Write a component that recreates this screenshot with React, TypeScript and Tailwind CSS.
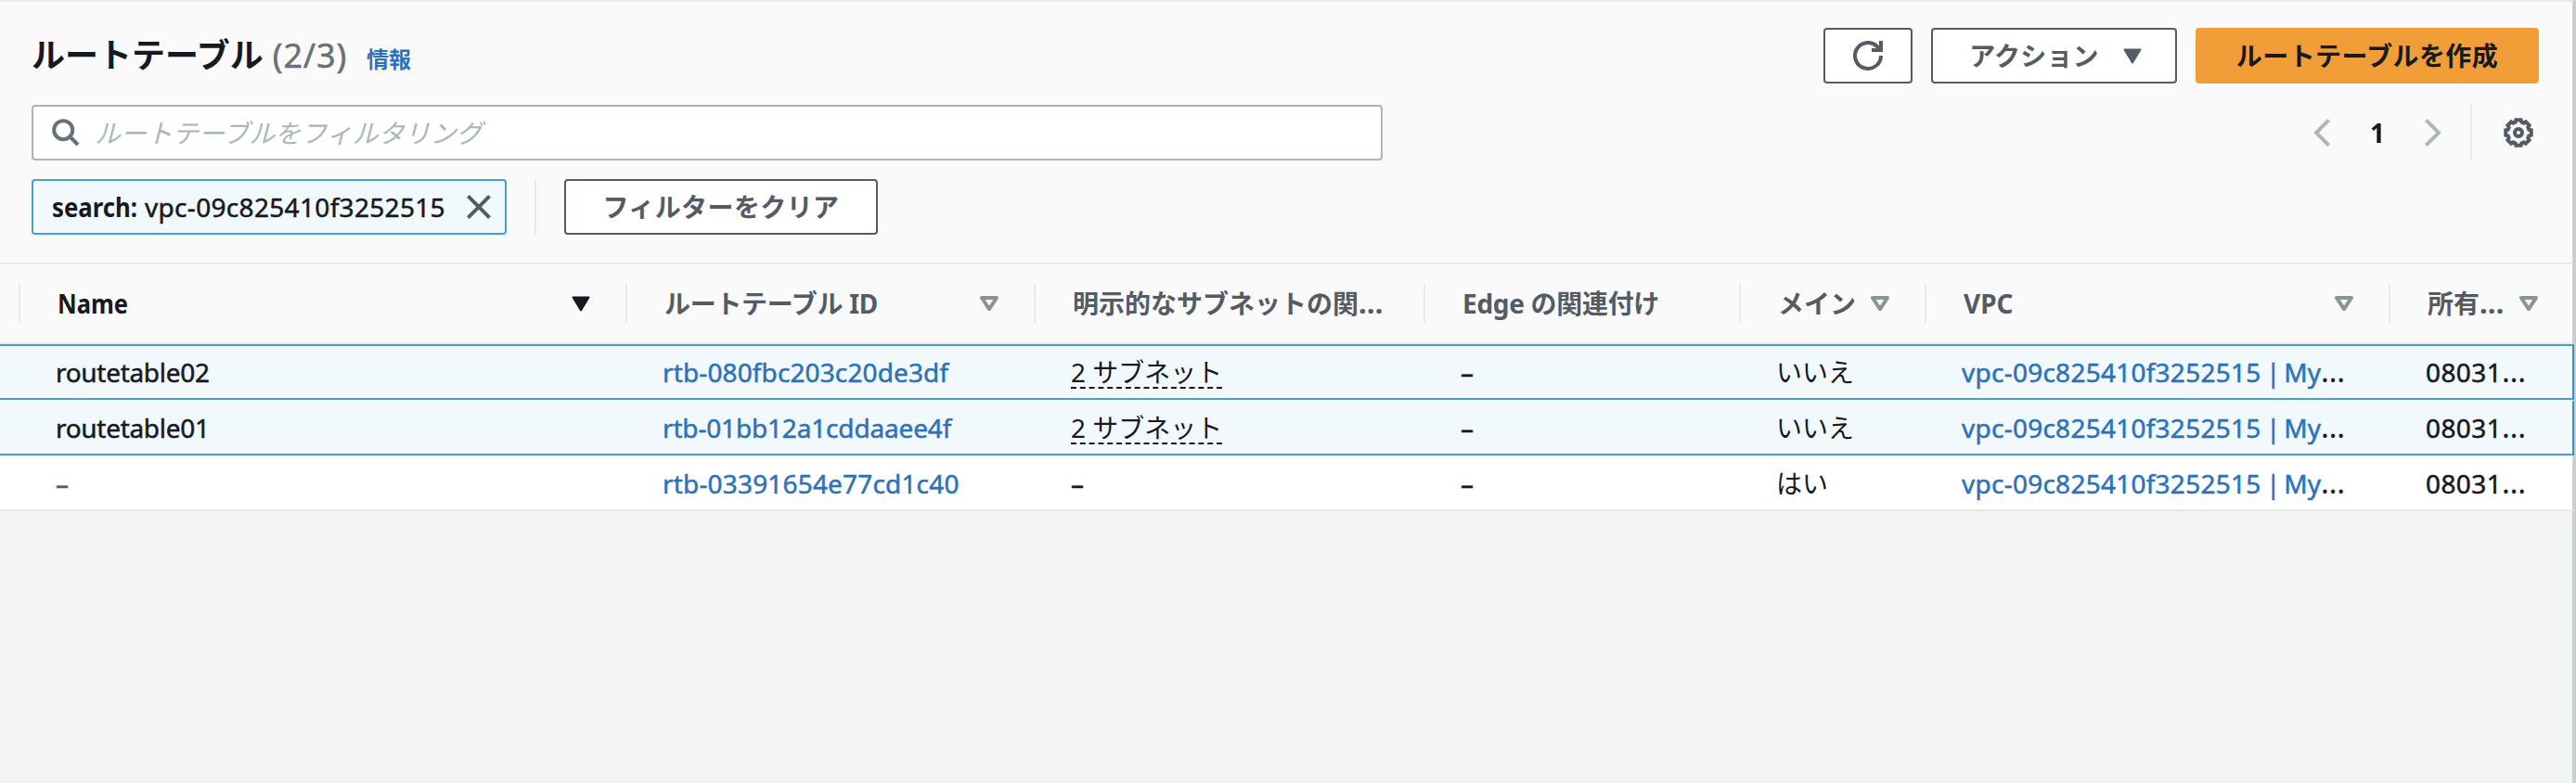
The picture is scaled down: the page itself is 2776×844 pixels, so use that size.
import React from "react";

function Triangle({ color }: { color: string }) {
  return (
    <svg width="20" height="17" viewBox="0 0 20 17" className="shrink-0">
      <path d="M1.5 1.5H18.5L10 15.5Z" fill={color} stroke={color} strokeWidth="2" strokeLinejoin="round" />
    </svg>
  );
}

function TriangleOutline() {
  return (
    <svg width="20" height="17" viewBox="0 0 20 17" className="shrink-0">
      <path d="M2 2H18L10 14.2Z" fill="none" stroke="#879596" strokeWidth="4" strokeLinejoin="round" />
    </svg>
  );
}

const gearPoints = Array.from({ length: 8 }, (_, k) =>
  [
    [14, -11],
    [14, 11],
    [11.8, 16],
    [11.8, 29],
  ].map(([r, offset]) => {
    const a = ((k * 45 + offset) * Math.PI) / 180;
    return `${(16 + r * Math.cos(a)).toFixed(2)},${(16 + r * Math.sin(a)).toFixed(2)}`;
  }),
)
  .flat()
  .join(" ");

function Gear() {
  return (
    <svg width="32" height="32" viewBox="0 0 32 32" fill="none" stroke="#545b64" strokeWidth="4">
      <polygon points={gearPoints} />
      <circle cx="16" cy="16" r="4" />
    </svg>
  );
}

function Ellipsis({ className = "text-[33px] [-webkit-text-stroke:0px]" }: { className?: string }) {
  return <span className={"leading-[0] " + className}>…</span>;
}

type Column = {
  label: string;
  width: string;
  text?: string;
  cut?: boolean;
  sort?: "filled" | "outline";
};

const columns: Column[] = [
  { label: "Name", width: "w-[654px]", text: "inline-block origin-left scale-x-[.91]", sort: "filled" },
  { label: "ルートテーブル ID", width: "w-[440px]", text: "tracking-[-0.3px]", sort: "outline" },
  { label: "明示的なサブネットの関", width: "w-[420px]", cut: true },
  { label: "Edge の関連付け", width: "w-[340px]", text: "tracking-[-0.3px]" },
  { label: "メイン", width: "w-[200px]", sort: "outline" },
  { label: "VPC", width: "w-[500px]", sort: "outline" },
  { label: "所有", width: "w-[199px]", cut: true, sort: "outline" },
];

const rows = [
  {
    name: "routetable02",
    id: "rtb-080fbc203c20de3df",
    idTracking: "tracking-[0.12px]",
    subnets: "2 サブネット",
    main: "いいえ",
    frame: "bg-[#f2f9fd] border-t-[#48a0c7] border-b-[#48a0c7] border-r-[#3b8fb8]",
  },
  {
    name: "routetable01",
    id: "rtb-01bb12a1cddaaee4f",
    idTracking: "tracking-[-0.17px]",
    subnets: "2 サブネット",
    main: "いいえ",
    frame: "bg-[#f2f9fd] border-t-transparent border-b-[#48a0c7] border-r-[#3b8fb8]",
  },
  {
    name: "–",
    id: "rtb-03391654e77cd1c40",
    idTracking: "tracking-[0.17px]",
    subnets: "",
    main: "はい",
    frame: "bg-white border-t-transparent border-b-[#eaeaea] border-r-[#c9cecf]",
  },
];

const latin = "[-webkit-text-stroke:0.5px_currentColor]";

export default function App() {
  return (
    <div className="flex w-[2776px] h-[844px] bg-[#f2f3f3] text-[28px] leading-none text-[#16191f] font-['Noto_Sans','Noto_Sans_CJK_JP',sans-serif] whitespace-nowrap overflow-hidden">
      <div className="flex flex-col w-[2774px] shrink-0">
        <div className="h-[285px] shrink-0 flex flex-col bg-[#fafafa] border-y-2 border-y-[#eaeaea] border-r-2 border-r-[#c9cecf] pl-[34px] pr-[36px] pt-[28px]">
          <div className="flex h-[60px] items-center">
            <h1 className="text-[36px] font-bold">ルートテーブル</h1>
            <span className={"ml-[10px] text-[36px] tracking-[0.8px] text-[#687078] " + latin}>(2/3)</span>
            <a className="ml-[21px] mt-[8px] text-[24px] font-bold text-[#2d72b8]">情報</a>
            <div className="ml-auto flex gap-[20px]">
              <button className="w-[96px] h-[60px] flex items-center justify-center border-2 border-[#545b64] rounded-[4px] bg-white">
                <svg width="32" height="32" viewBox="0 0 32 32" fill="none" stroke="#545b64" strokeWidth="4">
                  <path d="M30 16A14 14 0 1 1 25.5 5.7L29 9.5" />
                  <path d="M30 0V10H20" />
                </svg>
              </button>
              <button className="w-[265px] h-[60px] flex items-center justify-center gap-[26px] pl-[3px] border-2 border-[#545b64] rounded-[4px] bg-white font-bold text-[#545b64] tracking-[0.2px]">
                アクション
                <Triangle color="#545b64" />
              </button>
              <button className="w-[370px] h-[60px] flex items-center justify-center rounded-[4px] bg-[#f19e38] font-bold tracking-[0.4px]">
                ルートテーブルを作成
              </button>
            </div>
          </div>
          <div className="mt-[23px] flex h-[60px] items-center">
            <div className="w-[1456px] h-[60px] flex items-center border-2 border-[#aab7b8] rounded-[4px] bg-white pl-[20px]">
              <svg width="30" height="30" viewBox="0 0 30 30" fill="none" stroke="#687078" strokeWidth="4">
                <circle cx="12.2" cy="12.2" r="10" />
                <path d="M19.5 19.5L28 28" />
              </svg>
              <span className="ml-[16px] italic text-[#aab7b8]">ルートテーブルをフィルタリング</span>
            </div>
            <div className="ml-auto mr-[6px] flex h-[60px] items-center">
              <svg width="18" height="32" viewBox="0 0 18 32" fill="none" stroke="#aab7b8" strokeWidth="4">
                <path d="M16.6 2.4L3 16L16.6 29.6" />
              </svg>
              <span className="w-[102px] text-center font-bold">1</span>
              <svg width="18" height="32" viewBox="0 0 18 32" fill="none" stroke="#aab7b8" strokeWidth="4">
                <path d="M1.4 2.4L15 16L1.4 29.6" />
              </svg>
              <div className="ml-[31px] mr-[34px] w-[2px] h-[60px] bg-[#eaeaea]" />
              <Gear />
            </div>
          </div>
          <div className="mt-[20px] flex h-[60px] items-center">
            <div className="w-[512px] h-[60px] flex items-center border-2 border-[#48a0c7] rounded-[4px] bg-[#f2f9fd] pl-[20px]">
              <b className="w-[100px] origin-left scale-x-[.92]">search:</b>
              <span className={"tracking-[0.32px] " + latin}>vpc-09c825410f3252515</span>
              <svg width="26" height="26" viewBox="0 0 26 26" fill="none" stroke="#545b64" strokeWidth="4" className="ml-auto mr-[15px]">
                <path d="M1.4 1.4L24.6 24.6M24.6 1.4L1.4 24.6" />
              </svg>
            </div>
            <div className="mx-[30px] w-[2px] h-[60px] bg-[#eaeaea]" />
            <button className="w-[338px] h-[60px] flex items-center justify-center border-2 border-[#545b64] rounded-[4px] bg-white font-bold text-[#545b64] tracking-[0.4px]">
              フィルターをクリア
            </button>
          </div>
        </div>
        <div className="h-[86px] shrink-0 flex items-center bg-[#fafafa] border-b-2 border-b-[#eaeaea] border-r-2 border-r-[#c9cecf] pl-[20px]">
          {columns.map((c) => (
            <div key={c.label} className={"flex items-center shrink-0 " + c.width}>
              <div className="w-[2px] h-[42px] bg-[#eaeaea] shrink-0" />
              <span className={"ml-[40px] font-bold " + (c.text ?? "") + (c.sort === "filled" ? "" : " text-[#545b64]")}>
                {c.label}
                {c.cut && <Ellipsis className="text-[31px]" />}
              </span>
              {c.sort && (
                <div className="ml-auto pr-[38px]">
                  {c.sort === "filled" ? <Triangle color="#16191f" /> : <TriangleOutline />}
                </div>
              )}
            </div>
          ))}
        </div>
        {rows.map((r) => (
          <div key={r.id} className={"h-[60px] shrink-0 flex items-center pl-[60px] border-y-2 border-r-2 " + r.frame}>
            <span className={"w-[654px] shrink-0 tracking-[-0.3px] " + (r.name === "–" ? "text-[#545b64]" : "") + " " + latin}>{r.name}</span>
            <span className={"w-[440px] shrink-0 text-[#2d72b8] " + latin + " " + r.idTracking}>{r.id}</span>
            <span className="w-[420px] shrink-0">
              {r.subnets ? (
                <span className="inline-block align-middle h-[36px] leading-[32px] border-t-2 border-t-transparent border-b-2 border-b-[#16191f] [border-bottom-style:dashed]">
                  {r.subnets}
                </span>
              ) : (
                <span className={latin}>–</span>
              )}
            </span>
            <span className={"w-[340px] shrink-0 " + latin}>–</span>
            <span className="w-[200px] shrink-0">{r.main}</span>
            <span className={"w-[500px] shrink-0 " + latin}>
              <span className="text-[#2d72b8]">
                <span className="tracking-[0.25px]">vpc-09c825410f3252515</span>
                <span className="tracking-[-1.7px]"> | </span>My
              </span>
              <Ellipsis />
            </span>
            <span className={"tracking-[0.4px] " + latin}>
              08031
              <Ellipsis />
            </span>
          </div>
        ))}
        <div className="flex-1 border-r-2 border-r-[#c9cecf]" />
      </div>
      <div className="flex-1 bg-[#c9cecf]" />
    </div>
  );
}
